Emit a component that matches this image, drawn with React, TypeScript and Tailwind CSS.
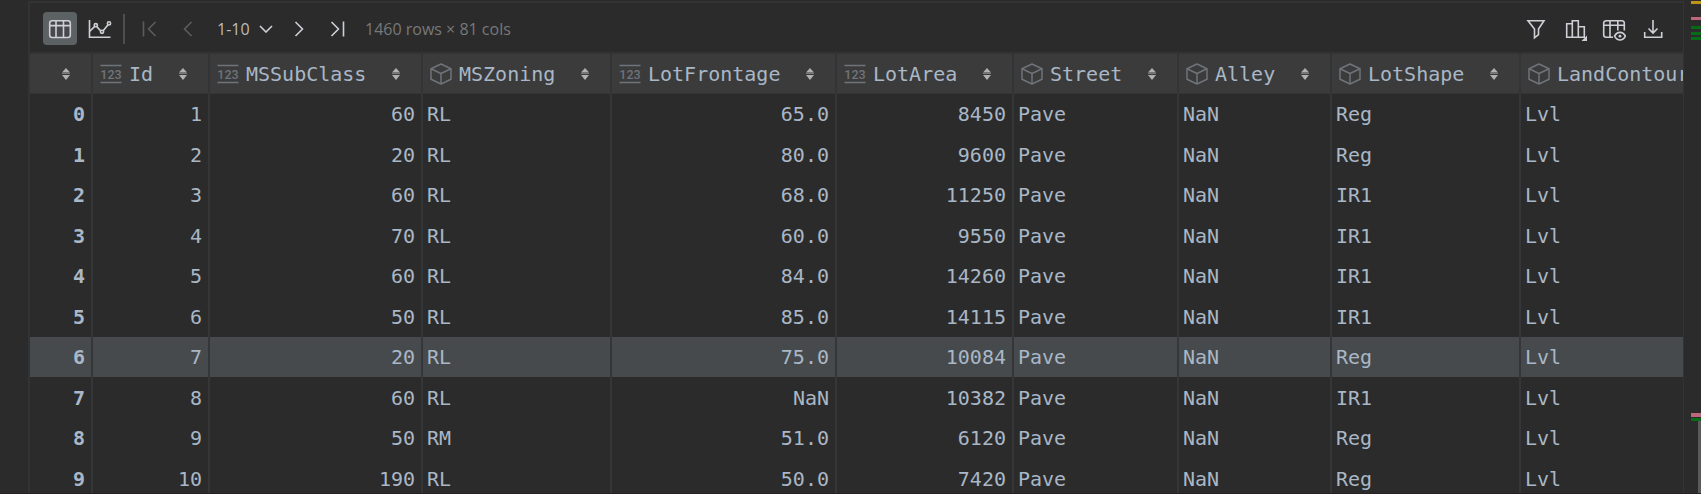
import type { ReactNode } from "react";

type Column = { name: string; kind: "number" | "object"; width: string };

const columns: Column[] = [
  { name: "Id", kind: "number", width: "w-[117px]" },
  { name: "MSSubClass", kind: "number", width: "w-[213px]" },
  { name: "MSZoning", kind: "object", width: "w-[189px]" },
  { name: "LotFrontage", kind: "number", width: "w-[225px]" },
  { name: "LotArea", kind: "number", width: "w-[177px]" },
  { name: "Street", kind: "object", width: "w-[165px]" },
  { name: "Alley", kind: "object", width: "w-[153px]" },
  { name: "LotShape", kind: "object", width: "w-[189px]" },
  { name: "LandContour", kind: "object", width: "w-auto" },
];

const rows = [
  ["1", "60", "RL", "65.0", "8450", "Pave", "NaN", "Reg", "Lvl"],
  ["2", "20", "RL", "80.0", "9600", "Pave", "NaN", "Reg", "Lvl"],
  ["3", "60", "RL", "68.0", "11250", "Pave", "NaN", "IR1", "Lvl"],
  ["4", "70", "RL", "60.0", "9550", "Pave", "NaN", "IR1", "Lvl"],
  ["5", "60", "RL", "84.0", "14260", "Pave", "NaN", "IR1", "Lvl"],
  ["6", "50", "RL", "85.0", "14115", "Pave", "NaN", "IR1", "Lvl"],
  ["7", "20", "RL", "75.0", "10084", "Pave", "NaN", "Reg", "Lvl"],
  ["8", "60", "RL", "NaN", "10382", "Pave", "NaN", "IR1", "Lvl"],
  ["9", "50", "RM", "51.0", "6120", "Pave", "NaN", "Reg", "Lvl"],
  ["10", "190", "RL", "50.0", "7420", "Pave", "NaN", "Reg", "Lvl"],
];

const selectedRow = 6;

function Icon({ children }: { children: ReactNode }) {
  return (
    <svg className="size-6 shrink-0" viewBox="0 0 24 24" fill="none" stroke="currentColor" strokeWidth="1.6" aria-hidden="true">
      {children}
    </svg>
  );
}

function ToolButton({ label, disabled, children }: { label: string; disabled?: boolean; children: ReactNode }) {
  return (
    <button type="button" aria-label={label} disabled={disabled} className="text-[#ced0d6] disabled:text-[#5a5d60]">
      <Icon>{children}</Icon>
    </button>
  );
}

function SortIcon() {
  return (
    <svg className="w-2 h-3 shrink-0" viewBox="0 0 8 12" aria-hidden="true">
      <path d="M4 0L8 4.5H0Z" fill="#afb1b3" />
      <path d="M0 5.5H8" stroke="#77797b" />
      <path d="M0 7H8L4 12Z" fill="#afb1b3" />
    </svg>
  );
}

function NumberIcon() {
  return (
    <svg className="w-[22px] h-6 shrink-0" viewBox="0 0 22 24" aria-hidden="true">
      <path d="M0.5 3.5H21.5M0.5 20.5H21.5" stroke="#6f737a" strokeWidth="1.5" />
      <text x="11" y="16.6" textAnchor="middle" fontSize="12.5" fontWeight="500" fontFamily="Roboto, sans-serif" fill="#6f737a">123</text>
    </svg>
  );
}

function ObjectIcon() {
  return (
    <svg className="w-[22px] h-6 shrink-0" viewBox="0 0 22 24" fill="none" stroke="#6f737a" strokeWidth="1.5" strokeLinejoin="round" aria-hidden="true">
      <path d="M11 2L21 6.8V17.2L11 22L1 17.2V6.8Z" />
      <path d="M1 6.8L11 11.5L21 6.8M11 11.5V22" />
    </svg>
  );
}

function Toolbar() {
  return (
    <div className="flex items-center h-[49px] pt-0.5 pl-[13px] pr-[18px] font-['Open_Sans',sans-serif] text-base">
      <div className="flex items-center gap-1.5">
        <button type="button" aria-label="Table view" aria-pressed="true" className="flex items-center justify-center w-[34px] h-[33px] rounded-[4px] bg-[#5c6164] text-[#ced0d6]">
          <Icon>
            <rect x="1.7" y="3.7" width="20.6" height="16.8" rx="2.5" fill="#46484d" />
            <path d="M2 8.6H22M8 4V20M15.5 4V20" />
          </Icon>
        </button>
        <button type="button" aria-label="Chart view" className="flex items-center justify-center w-[34px] h-[33px] text-[#ced0d6]">
          <Icon>
            <path d="M1.5 3V20.3H22.5" />
            <path d="M1.5 14.5L6.8 9.4M8.8 9.6L13 14.2M15 14L20.2 7.6" />
            <circle cx="7.8" cy="8.2" r="1.6" />
            <circle cx="14" cy="14.8" r="1.6" />
            <circle cx="21" cy="6.4" r="1.6" />
          </Icon>
        </button>
        <div className="w-0.5 h-[30px] bg-[#4c4e50]"></div>
      </div>

      {/* Paging */}
      <div className="flex items-center gap-3.5 ml-3">
        <ToolButton label="First page" disabled>
          <path d="M6.5 4.5V19.5M18.5 5L11.5 12L18.5 19" />
        </ToolButton>
        <ToolButton label="Previous page" disabled>
          <path d="M16.5 5L9.5 12L16.5 19" />
        </ToolButton>
        <div className="grid items-center ml-1 w-14">
          <select aria-label="Rows shown" className="col-start-1 row-start-1 w-full appearance-none bg-transparent text-[#bbbbbb] outline-none">
            <option>1-10</option>
          </select>
          <svg className="col-start-1 row-start-1 justify-self-end w-3.5 h-2 pointer-events-none text-[#ced0d6]" viewBox="0 0 14 8" fill="none" stroke="currentColor" strokeWidth="1.6" aria-hidden="true">
            <path d="M1 1L7 7L13 1" />
          </svg>
        </div>
        <ToolButton label="Next page">
          <path d="M8.5 5L15.5 12L8.5 19" />
        </ToolButton>
        <ToolButton label="Last page">
          <path d="M6.5 5L13.5 12L6.5 19M18.5 4.5V19.5" />
        </ToolButton>
      </div>
      <span className="ml-4 text-[#787878] whitespace-nowrap">1460 rows × 81 cols</span>

      {/* Actions */}
      <div className="flex items-center gap-[15px] ml-auto">
        <ToolButton label="Filter">
          <path d="M4 3.7H20L14.5 12V17.5L10.5 20.8V12Z" />
        </ToolButton>
        <ToolButton label="Statistics">
          <path d="M3.7 6.7H9.3V20.3H3.7ZM9.3 3.7H15.3V20.3H9.3ZM15.3 9.7H21.3V20.3H15.3Z" />
          <path d="M24 18.5V24H18.5Z" fill="currentColor" stroke="none" />
        </ToolButton>
        <ToolButton label="Column visibility">
          <path d="M11 20.3H4.2A2.5 2.5 0 0 1 1.7 17.8V6.2A2.5 2.5 0 0 1 4.2 3.7H19.8A2.5 2.5 0 0 1 22.3 6.2V13.5M2 8.3H22M8 4V20M15.8 4V13.5" />
          <path d="M12.5 19.2C14 16.5 16 15.4 18 15.4S22 16.5 23.4 19.2C22 21.9 20 23 18 23S14 21.9 12.5 19.2Z" />
          <circle cx="18" cy="19.2" r="1.4" fill="currentColor" stroke="none" />
        </ToolButton>
        <ToolButton label="Export">
          <path d="M12 3V15.5M7.5 11.5L12 16L16.5 11.5M3.7 15V20.3H20.7V15" />
        </ToolButton>
      </div>
    </div>
  );
}

function DataTable() {
  return (
    <table className="w-full table-fixed border-separate border-spacing-0 font-['DejaVu_Sans_Mono',monospace] text-xl text-[#a9b7c6] whitespace-nowrap">
      <colgroup>
        <col className="w-[63px]" />
        {columns.map((column) => (
          <col key={column.name} className={column.width} />
        ))}
      </colgroup>
      <thead>
        <tr className="bg-[#3b3b3b]">
          <th className="h-[41px] p-0 border-r-2 border-y border-[#333435]">
            <button type="button" aria-label="Sort by index" className="flex justify-end w-full pr-[21px]">
              <SortIcon />
            </button>
          </th>
          {columns.map((column) => (
            <th key={column.name} className="h-[41px] p-0 border-r-2 last:border-r-0 border-y border-[#333435] font-normal overflow-hidden">
              <button type="button" className="flex items-center w-full pl-[7px] pr-[21px]">
                {column.kind === "number" ? <NumberIcon /> : <ObjectIcon />}
                <span className="ml-[7px] mr-auto">{column.name}</span>
                <SortIcon />
              </button>
            </th>
          ))}
        </tr>
      </thead>
      <tbody>
        {rows.map((row, i) => (
          <tr key={i} className={`h-10 even:h-[41px] ${i === selectedRow ? "bg-[#464a4c]" : ""}`}>
            <th className="py-0 pl-0 pr-1.5 border-r-2 border-[#353637] text-right font-bold">{i}</th>
            {row.map((value, j) => (
              <td key={j} className={`py-0 pl-1 pr-1.5 border-r-2 last:border-r-0 border-[#353637] ${columns[j].kind === "number" ? "text-right" : "text-left"}`}>
                {value}
              </td>
            ))}
          </tr>
        ))}
      </tbody>
    </table>
  );
}

export default function App() {
  return (
    <main className="flex h-screen overflow-hidden bg-[#2b2b2b] border-b border-[#2a2024]">
      <section className="flex-1 min-w-0 ml-7 mt-px border-t-2 border-l-2 border-r border-[#323334] overflow-hidden">
        <Toolbar />
        <div className="border-t border-[#323334] overflow-hidden">
          <DataTable />
        </div>
      </section>

      {/* Change markers and scrollbar */}
      <aside className="flex flex-col w-[17px] pl-[7px] shrink-0">
        <div className="h-[3px] mt-px bg-[#be9117]"></div>
        <div className="h-[3px] mt-[13px] bg-[#bc6679]"></div>
        <div className="h-[3px] mt-1.5 bg-[#066b17]"></div>
        <div className="h-[3px] mt-[3px] bg-[#066b17]"></div>
        <div className="h-[3px] mt-0.5 bg-[#066b17]"></div>
        <div className="h-1 mt-auto bg-[#bc6679]"></div>
        <div className="h-[3px] mt-px bg-[#066b17]"></div>
        <div className="self-end w-[3px] h-[72px] bg-[#5a5a5a]"></div>
      </aside>
    </main>
  );
}
